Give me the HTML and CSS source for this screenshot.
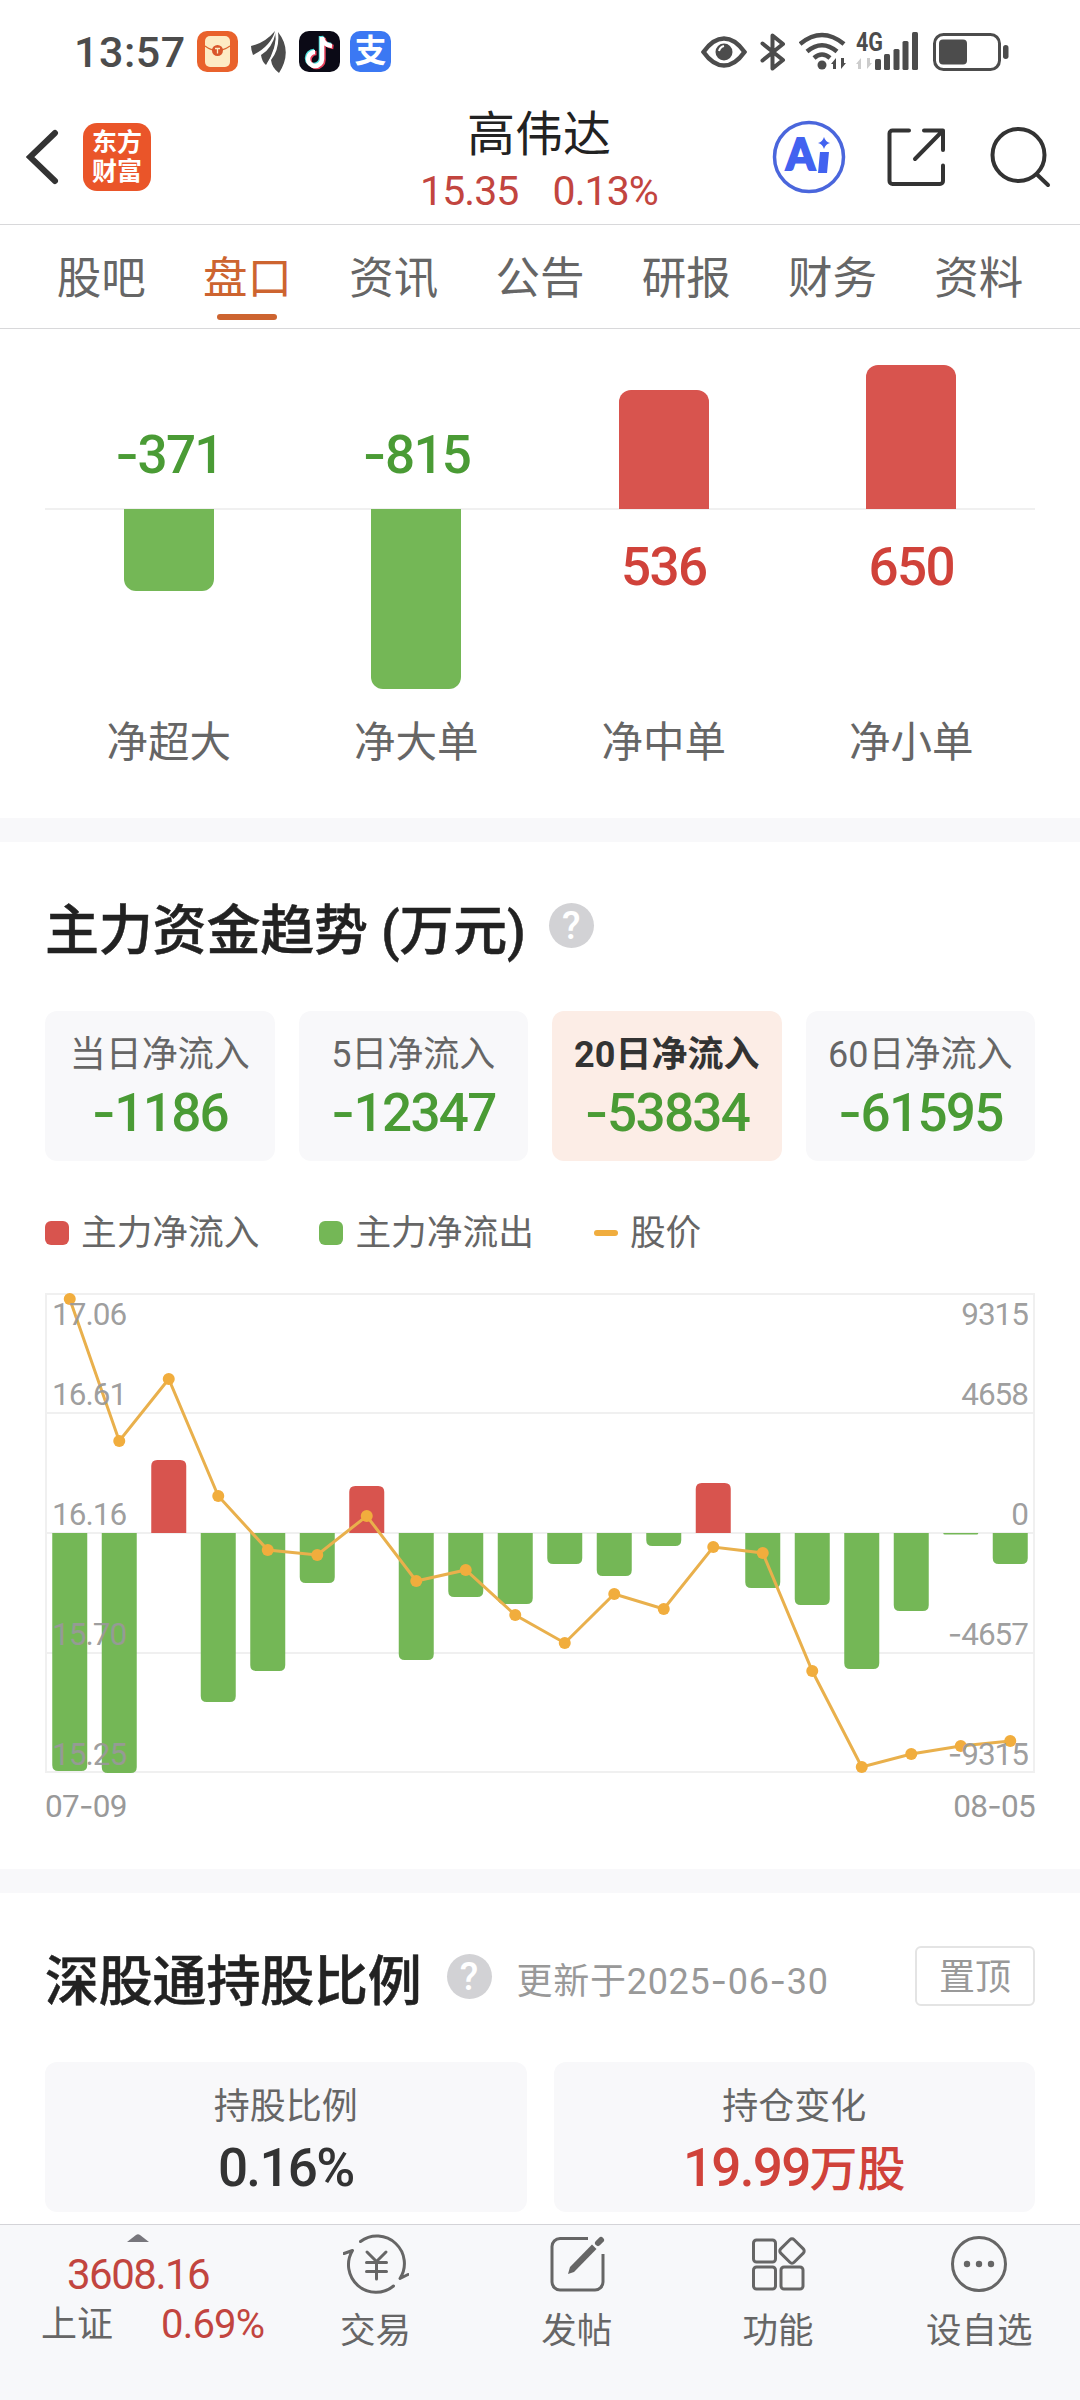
FILE: index.html
```html
<!DOCTYPE html>
<html lang="zh-CN">

<head>
    <meta charset="UTF-8">
    <meta name="viewport" content="width=device-width, initial-scale=1.0">
    <title>高伟达 - 盘口</title>
    <link rel="stylesheet" href="styles.css">
</head>

<body>
    <!-- Status bar -->
    <div class="status">
        <span class="clock">13:57</span>
        <svg class="app-icon mail" width="41" height="41" viewBox="0 0 41 41">
            <rect width="41" height="41" rx="10" fill="#e9622c"/>
            <rect x="8" y="5" width="25" height="31" rx="5" fill="#fdebc4"/>
            <path d="M8 15q12 9 25 0" fill="none" stroke="#d9652f" stroke-width="1.2"/>
            <circle cx="20.5" cy="19.5" r="5.5" fill="#d9562b"/>
            <path d="M18 17.5h5M20.5 17.5v5" stroke="#fdebc4" stroke-width="1.3"/>
        </svg>
        <svg class="wing" width="36" height="42" viewBox="0 0 36 42" fill="#4c4c4c">
            <path d="M0 15Q14 12 24 0Q20 15 2 24Q0 19 0 15Z"/>
            <path d="M25 1Q26 17 15 34Q11 31 10 24Q21 18 25 1Z"/>
            <path d="M27 1Q42 20 28 42Q21 37 20 29Q29 18 27 1Z"/>
            <path d="M24.5 0Q28 16 16.500 33" fill="none" stroke="#fff" stroke-width="1"/>
        </svg>
        <svg class="app-icon" width="41" height="41" viewBox="0 0 41 41">
            <rect width="41" height="41" rx="10" fill="#0b0a16"/>
            <g fill="none" stroke-width="4.5">
                <path d="M22 5v22a7 7 0 1 1-7-7M22 5q1 8 10 9" stroke="#4fe0dc"/>
                <path d="M24.500 7v22a7 7 0 1 1-7-7M24.500 7q1 8 10 9" stroke="#e8405a"/>
                <path d="M23 6v22a7 7 0 1 1-7-7M23 6q1 8 10 9" stroke="#fff"/>
            </g>
        </svg>
        <span class="app-icon pay">支</span>

        <div class="status-right">
            <svg width="46" height="32" viewBox="0 0 46 32">
                <path d="M2.5 16Q12 2.500 23 2.500T43.500 16Q34 29.500 23 29.500T2.500 16Z" fill="none" stroke="#4c4c4c" stroke-width="4.5"/>
                <circle cx="23" cy="16" r="8.5" fill="#4c4c4c"/>
                <path d="M18 15q1-4 5-5" fill="none" stroke="#fff" stroke-width="2"/>
            </svg>
            <svg class="bt" width="26" height="38" viewBox="0 0 26 38" fill="none" stroke="#4c4c4c" stroke-width="4" stroke-linejoin="round" stroke-linecap="round">
                <path d="M2.500 10.500L23 27L12.500 35.500V2.500L23 11L2.500 27.500"/>
            </svg>
            <svg class="wifi" width="48" height="39" viewBox="0 0 48 39">
                <g fill="none" stroke="#4c4c4c" stroke-width="4.5">
                    <path d="M1 12Q23-6 45 12M8 19.500Q23 7 38 19.500M15 26Q23 19 31 26"/>
                </g>
                <circle cx="23" cy="33" r="4.5" fill="#4c4c4c"/>
                <path d="M32 32l5-6v11h-3v-5zM47 31l-5 6V26h3v5z" fill="#4c4c4c"/>
            </svg>
            <svg class="signal" width="63" height="39" viewBox="0 0 63 39">
                <text x="0" y="19" textLength="27" lengthAdjust="spacingAndGlyphs">4G</text>
                <path d="M0 32l5-6v11h-3v-5zM16 31l-5 6V26h3v5z" fill="#ccc"/>
                <g fill="#4c4c4c">
                    <rect x="19" y="27" width="6" height="11" rx="1.5"/>
                    <rect x="28" y="22" width="6" height="16" rx="1.5"/>
                    <rect x="37.5" y="17" width="6" height="21" rx="1.5"/>
                    <rect x="46.5" y="9" width="6" height="29" rx="1.5"/>
                    <rect x="56" y="0" width="6" height="38" rx="1.5"/>
                </g>
            </svg>
            <svg width="76" height="38" viewBox="0 0 76 38">
                <rect x="1.5" y="1.5" width="65" height="35" rx="9" fill="none" stroke="#4c4c4c" stroke-width="3"/>
                <rect x="6" y="6.5" width="28" height="25" rx="4" fill="#4c4c4c"/>
                <rect x="70" y="12" width="5.5" height="14" rx="2.7" fill="#4c4c4c"/>
            </svg>
        </div>
    </div>

    <!-- Header -->
    <header class="header">
        <svg class="back" width="34" height="56" viewBox="0 0 34 56">
            <path d="M29 4L4 28L29 52" fill="none" stroke="#333" stroke-width="6" stroke-linecap="round"/>
        </svg>
        <div class="logo"><span>东方</span><span>财富</span></div>
        <div class="stock">
            <div class="stock-name">高伟达</div>
            <div class="stock-price"><span>15.35</span><span>0.13%</span></div>
        </div>
        <div class="header-icons">
            <svg width="74" height="74" viewBox="0 0 74 74">
                <circle cx="37" cy="37" r="34.5" fill="none" stroke="#4a66dc" stroke-width="3.5"/>
                <text class="ai" x="14" y="50" textLength="29" lengthAdjust="spacingAndGlyphs">A</text>
                <path d="M48 32h9l-2 21h-9z" fill="#4262f0"/>
                <path d="M52 17q1.500 5 6 6q-4.500 1-6 6q-1.500-5-6-6q4.500-1 6-6z" fill="#4262f0"/>
            </svg>
            <svg width="60" height="60" viewBox="0 0 60 60" fill="none" stroke="#333" stroke-width="4" stroke-linecap="round" stroke-linejoin="round">
                <path d="M22 3.500H5.500a3 3 0 0 0-3 3V54a3 3 0 0 0 3 3H53a3 3 0 0 0 3-3V38.500M37 3.500H56V23M55 4.500L28 32"/>
            </svg>
            <svg width="62" height="62" viewBox="0 0 62 62" fill="none" stroke="#333" stroke-width="4" stroke-linecap="round">
                <circle cx="28.5" cy="29" r="26"/>
                <path d="M47 48.500L58 59"/>
            </svg>
        </div>
    </header>

    <nav class="tabs">
        <a>股吧</a>
        <a class="active">盘口</a>
        <a>资讯</a>
        <a>公告</a>
        <a>研报</a>
        <a>财务</a>
        <a>资料</a>
    </nav>

    <main>
        <!-- Net flow by order size -->
        <section class="orders">
            <div class="order">
                <div class="up"><span class="num green"><i>-</i>371</span></div>
                <div class="down"><div class="bar" style="height:82px"></div></div>
                <div class="order-name">净超大</div>
            </div>
            <div class="order">
                <div class="up"><span class="num green"><i>-</i>815</span></div>
                <div class="down"><div class="bar" style="height:180px"></div></div>
                <div class="order-name">净大单</div>
            </div>
            <div class="order">
                <div class="up"><div class="bar" style="height:119px"></div></div>
                <div class="down"><span class="num red">536</span></div>
                <div class="order-name">净中单</div>
            </div>
            <div class="order">
                <div class="up"><div class="bar" style="height:144px"></div></div>
                <div class="down"><span class="num red">650</span></div>
                <div class="order-name">净小单</div>
            </div>
        </section>

        <!-- Main capital trend -->
        <section class="trend">
            <div class="title-row">
                <h2>主力资金趋势 (万元)</h2>
                <span class="help">?</span>
            </div>
            <div class="cards">
                <div class="card"><span>当日净流入</span><b class="num green"><i>-</i>1186</b></div>
                <div class="card"><span>5日净流入</span><b class="num green"><i>-</i>12347</b></div>
                <div class="card selected"><span>20日净流入</span><b class="num green"><i>-</i>53834</b></div>
                <div class="card"><span>60日净流入</span><b class="num green"><i>-</i>61595</b></div>
            </div>
            <div class="legend">
                <span><em class="sq red-bg"></em>主力净流入</span>
                <span><em class="sq green-bg"></em>主力净流出</span>
                <span><em class="dash"></em>股价</span>
            </div>
            <svg class="chart" id="trendChart" width="990" height="482" viewBox="0 0 990 482"></svg>
            <div class="dates"><span>07<i>-</i>09</span><span>08<i>-</i>05</span></div>
        </section>

        <!-- Shenzhen Connect holdings -->
        <section class="holding">
            <div class="title-row">
                <h2>深股通持股比例</h2>
                <span class="help">?</span>
                <span class="updated">更新于2025<i>-</i>06<i>-</i>30</span>
                <button class="pin">置顶</button>
            </div>
            <div class="cards">
                <div class="card"><span>持股比例</span><b class="num">0.16%</b></div>
                <div class="card"><span>持仓变化</span><b class="num red">19.99<small>万股</small></b></div>
            </div>
        </section>
    </main>

    <!-- Bottom bar -->
    <footer class="bottom">
        <div class="index">
            <svg class="caret" width="22" height="8" viewBox="0 0 22 8"><path d="M0 8L9 1q2-1.500 4 0L22 8z" fill="#77767c"/></svg>
            <div class="index-value">3608.16</div>
            <div class="index-row"><span>上证</span><span class="pct">0.69%</span></div>
        </div>
        <div class="item">
            <svg width="66" height="60" viewBox="0 0 66 60" fill="none" stroke="#666" stroke-width="3" stroke-linecap="round" stroke-linejoin="round">
                <path d="M17.500 7.500A27.500 27.500 0 0 1 57 44.500L65 40.500"/>
                <path d="M50.500 52A27.500 27.500 0 0 1 9.500 16.500L1 19.500"/>
                <path d="M24 18l9.500 9.500L43 18M23.500 28.500h20M23.500 37.500h20M33.500 28v17"/>
            </svg>
            <span>交易</span>
        </div>
        <div class="item">
            <svg width="60" height="60" viewBox="0 0 60 60">
                <path d="M41 4.500H13a8 8 0 0 0-8 8V48a8 8 0 0 0 8 8H48a8 8 0 0 0 8-8V20" fill="none" stroke="#666" stroke-width="3"/>
                <path d="M21 40l2-7L45 10.500l4.500 4.500L27 38z" fill="#666"/>
                <path d="M51 9l3-3" stroke="#666" stroke-width="6" stroke-linecap="round"/>
            </svg>
            <span>发帖</span>
        </div>
        <div class="item">
            <svg width="60" height="60" viewBox="0 0 60 60" fill="none" stroke="#666" stroke-width="3">
                <rect x="5.5" y="6" width="22" height="22" rx="3"/>
                <rect x="5.5" y="33" width="22" height="22" rx="3"/>
                <rect x="33" y="33" width="22" height="22" rx="3"/>
                <rect x="34.5" y="7.5" width="19" height="19" rx="3" transform="rotate(45 44 17)"/>
            </svg>
            <span>功能</span>
        </div>
        <div class="item">
            <svg width="60" height="60" viewBox="0 0 60 60">
                <circle cx="30" cy="30" r="26.5" fill="none" stroke="#666" stroke-width="3"/>
                <g fill="#666"><circle cx="18" cy="30" r="3.2"/><circle cx="30" cy="30" r="3.2"/><circle cx="42" cy="30" r="3.2"/></g>
            </svg>
            <span>设自选</span>
        </div>
    </footer>

    <script>
        // Bar heights (positive = inflow) and price points, in chart pixels
        const flows = [-238, -240, 73, -169, -138, -50, 47, -127, -64, -71, -31, -43, -13, 50, -55, -72, -136, -78, -1.5, -31];
        const prices = [6, 148, 86, 203, 257, 262, 223, 288, 277, 322, 350, 301, 316, 254, 260, 378, 474, 461, 453, 448];
        const leftAxis = ['17.06', '16.61', '16.16', '15.70', '15.25'];
        const rightAxis = ['9315', '4658', '0', '-4657', '-9315'];
        const labelY = [32, 112, 232, 352, 472];
        const zero = 240;
        const step = 49.5;

        let out = '<rect class="grid" x="1" y="1" width="988" height="478"/>';
        [120, 240, 360].forEach(y => {
            out += `<path class="grid" d="M0 ${y}H990"/>`;
        });

        flows.forEach((v, i) => {
            const x = step * i + step / 2 - 17.5;
            const h = Math.abs(v);
            const r = Math.min(6, h);
            out += v > 0
                ? `<path class="in" d="M${x} ${zero}v${r - h}q0 ${-r} ${r} ${-r}h${35 - 2 * r}q${r} 0 ${r} ${r}v${h - r}z"/>`
                : `<path class="out" d="M${x} ${zero}v${h - r}q0 ${r} ${r} ${r}h${35 - 2 * r}q${r} 0 ${r} ${-r}v${r - h}z"/>`;
        });

        const points = prices.map((y, i) => [step * i + step / 2, y]);
        out += `<polyline class="price" points="${points.join(' ')}"/>`;
        points.forEach(p => {
            out += `<circle class="dot" cx="${p[0]}" cy="${p[1]}" r="6"/>`;
        });

        labelY.forEach((y, i) => {
            out += `<text x="7" y="${y}">${leftAxis[i]}</text>`;
            const label = rightAxis[i].replace('-', '<tspan class="minus">-</tspan>');
            out += `<text x="983" y="${y}" text-anchor="end">${label}</text>`;
        });

        document.getElementById('trendChart').innerHTML = out;
    </script>
</body>

</html>
```

FILE: styles.css
```css
* {
    box-sizing: border-box;
}

body {
    margin: 0;
    width: 1080px;
    height: 2400px;
    overflow: hidden;
    display: flex;
    flex-direction: column;
    background: #fff;
    color: #666;
    font-family: Roboto, "Noto Sans CJK SC", sans-serif;
}

svg {
    display: block;
    flex-shrink: 0;
}

i {
    font-family: Inter, sans-serif;
    font-style: normal;
}

/* Status bar */
.status {
    display: flex;
    align-items: center;
    height: 103px;
    padding: 0 71px 0 74px;
    flex-shrink: 0;
}

.clock {
    width: 123px;
    font-size: 43px;
    font-weight: 500;
    color: #4c4c4c;
    letter-spacing: 0.5px;
}

.app-icon {
    width: 41px;
    height: 41px;
    margin-right: 10px;
}

.mail {
    margin-right: 13px;
}

.wing {
    margin-right: 12px;
}

.pay {
    border-radius: 10px;
    background: #3b78f3;
    color: #fff;
    font-size: 32px;
    font-weight: 700;
    line-height: 40px;
    text-align: center;
}

.status-right {
    display: flex;
    align-items: center;
    margin-left: auto;
}

.bt {
    margin: 0 13px 0 13px;
}

.signal {
    margin: 0 14px 0 9px;
    overflow: visible;
}

.signal text {
    font-size: 25px;
    font-weight: 700;
    fill: #4c4c4c;
}

/* Header */
.header {
    display: flex;
    align-items: center;
    height: 122px;
    padding: 0 28px 13px 26px;
    border-bottom: 1px solid #d8d8da;
    flex-shrink: 0;
}

.logo {
    display: flex;
    flex-direction: column;
    justify-content: center;
    width: 68px;
    height: 68px;
    margin-left: 23px;
    border-radius: 14px;
    background: #ea5529;
    color: #fff;
    font-size: 25px;
    font-weight: 700;
    line-height: 29px;
    text-align: center;
}

.stock {
    width: 300px;
    margin-left: 238px;
    padding-top: 11px;
    text-align: center;
}

.stock-name {
    color: #222;
    font-size: 48px;
    line-height: 56px;
}

.stock-price {
    display: flex;
    justify-content: center;
    gap: 34px;
    color: #c2453f;
    font-size: 41px;
    line-height: 56px;
    letter-spacing: -0.9px;
}

.header-icons {
    display: flex;
    align-items: center;
    margin-left: auto;
}

.header-icons svg:nth-child(2) {
    margin: 0 43px 0 41px;
}

.ai {
    font-family: Lato, sans-serif;
    font-size: 44px;
    font-weight: 900;
    fill: #4262f0;
    stroke: #4262f0;
    stroke-width: 2;
}

/* Tabs */
.tabs {
    display: flex;
    height: 104px;
    padding: 0 28px;
    border-bottom: 1px solid #d8d8da;
    font-size: 44.5px;
    flex-shrink: 0;
}

.tabs a {
    display: flex;
    flex: 1;
    flex-direction: column;
    align-items: center;
    line-height: 88px;
    padding-top: 10px;
}

.tabs .active {
    color: #cd6430;
}

.tabs .active::after {
    content: "";
    width: 60px;
    height: 6px;
    margin-top: -9px;
    border-radius: 3px;
    background: #cd6430;
}

main {
    flex: 1;
    overflow: hidden;
}

.num {
    color: #333;
    font-size: 53px;
    font-weight: 500;
    line-height: 60px;
    letter-spacing: -1.7px;
}

.num small {
    font-size: 48px;
    line-height: 1;
    letter-spacing: 0;
}

.green {
    color: #4a9b35;
}

.red {
    color: #d0423a;
}

.red-bg,
.up .bar {
    background: #d8544e;
}

.green-bg,
.down .bar {
    background: #74b756;
}

/* Order size bars */
.orders {
    display: flex;
    height: 489px;
    padding: 0 45px;
}

.order {
    flex: 1;
}

.up,
.down {
    display: flex;
    flex-direction: column;
    align-items: center;
}

.up {
    height: 181px;
    justify-content: flex-end;
    border-bottom: 2px solid #f0f0f0;
}

.up .num {
    margin-bottom: 23px;
}

.up .bar {
    margin-bottom: -1px;
    border-radius: 12px 12px 0 0;
}

.down {
    height: 200px;
}

.down .num {
    margin-top: 27px;
}

.down .bar {
    margin-top: -1px;
    border-radius: 0 0 12px 12px;
}

.bar {
    width: 90px;
    flex-shrink: 0;
}

.order-name {
    font-size: 41.5px;
    line-height: 60px;
    margin-top: 3px;
    text-align: center;
}

/* Capital trend */
.trend,
.holding {
    padding: 0 45px;
    border-top: 24px solid #f8f8fa;
}

.trend {
    height: 1051px;
}

.title-row {
    display: flex;
    align-items: center;
    height: 169px;
}

h2 {
    margin: 0;
    color: #222;
    font-size: 54px;
    font-weight: 500;
    letter-spacing: -0.2px;
    -webkit-text-stroke: 0.5px #222;
}

.help {
    width: 45px;
    height: 45px;
    margin: 0 0 3px 25px;
    border-radius: 50%;
    background: #d2d2d5;
    color: #fff;
    font-size: 38px;
    font-weight: 500;
    line-height: 46px;
    text-align: center;
}

.trend .help {
    margin-left: 23px;
}

.cards {
    display: flex;
    gap: 24px;
}

.card {
    display: flex;
    flex: 1;
    flex-direction: column;
    align-items: center;
    height: 150px;
    padding-top: 18px;
    border-radius: 12px;
    background: #f8f8fa;
    font-size: 36px;
    line-height: 52px;
}

.card .num {
    margin-top: 1px;
}

.selected {
    background: #fcede6;
}

.selected span {
    color: #333;
    font-weight: 700;
}

.legend {
    display: flex;
    gap: 60px;
    height: 132px;
    font-size: 35.7px;
    line-height: 52px;
}

.legend span {
    display: flex;
    align-items: center;
    height: 143px;
}

.sq,
.dash {
    width: 24px;
    height: 24px;
    margin-right: 12px;
    border-radius: 6px;
}

.dash {
    height: 6px;
    border-radius: 3px;
    background: #f0ad3e;
}

.chart text {
    fill: #999;
    fill-opacity: 0.95;
    font-size: 31.5px;
    letter-spacing: -1px;
}

.chart .minus {
    font-family: Inter, sans-serif;
}

.chart .grid {
    fill: none;
    stroke: #f0f0f0;
    stroke-width: 2;
}

.in {
    fill: #d8544e;
}

.out {
    fill: #74b756;
}

.price {
    fill: none;
    stroke: #e9b04c;
    stroke-width: 3;
}

.dot {
    fill: #f1ad3d;
}

.dates {
    display: flex;
    justify-content: space-between;
    color: #999;
    font-size: 31.5px;
    line-height: 40px;
    letter-spacing: -0.7px;
    padding-top: 11px;
}

/* Holdings */
.updated {
    margin-left: 25px;
    color: #999;
    font-size: 36px;
    letter-spacing: 0.7px;
}

.pin {
    width: 120px;
    height: 60px;
    margin: 0 0 3px auto;
    padding: 4px 0 0;
    border: 2px solid #e4e4e4;
    border-radius: 6px;
    background: #fff;
    color: #999;
    font-family: inherit;
    font-size: 36px;
    line-height: 50px;
}

.holding .cards {
    gap: 27px;
}

.holding .card {
    padding-top: 19px;
}

.holding .num {
    margin-top: 5px;
}

/* Bottom bar */
.bottom {
    display: flex;
    height: 176px;
    border-top: 1px solid #d4d4d8;
    background: #f7f8fa;
    flex-shrink: 0;
}

.index {
    width: 275px;
}

.caret {
    margin: 9px 0 0 127px;
}

.index-value {
    margin: 8px 0 0 67px;
    color: #c2453f;
    font-size: 42px;
    line-height: 50px;
    letter-spacing: -1.5px;
}

.index-row {
    display: flex;
    align-items: center;
    margin-top: 1px;
    padding-left: 41px;
    font-size: 36px;
    line-height: 48px;
}

.pct {
    margin-left: 48px;
    color: #c2453f;
    font-size: 40px;
    letter-spacing: -0.8px;
}

.item {
    display: flex;
    flex: 1;
    flex-direction: column;
    align-items: center;
    padding-top: 9px;
    font-size: 35.5px;
    line-height: 52px;
}

.item span {
    margin-top: 11px;
}
```
